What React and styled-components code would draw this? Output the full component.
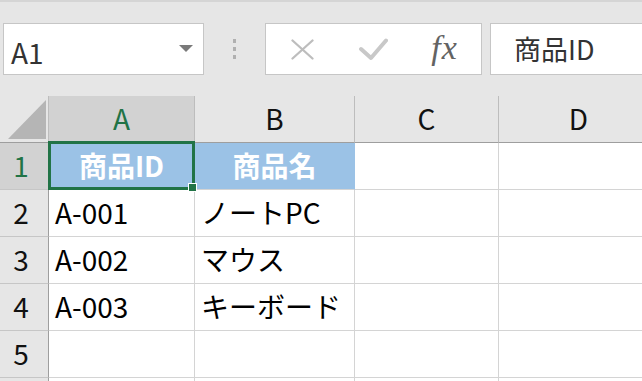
import React from "react";
import styled, { createGlobalStyle } from "styled-components";

const GlobalStyle = createGlobalStyle`
  html, body {
    margin: 0;
    padding: 0;
    background: #e6e6e6;
  }
  body {
    font-family: "Noto Sans CJK JP", "Noto Sans", sans-serif;
  }
`;

const Window = styled.div`
  width: 642px;
  height: 381px;
  overflow: hidden;
  box-sizing: border-box;
  background: #e6e6e6;
  border-top: 2px solid #d5d5d5;
`;

const FormulaBar = styled.div`
  display: flex;
  height: 52px;
  margin: 21px 0 21px 3px;
`;

const NameBox = styled.div`
  display: flex;
  align-items: center;
  box-sizing: border-box;
  width: 201px;
  padding: 5px 10px 0 7px;
  background: #fff;
  border: 1px solid #c6c6c6;
  font-size: 28px;
  color: #333;
`;

const Arrow = styled.span`
  margin-left: auto;
  width: 0;
  height: 0;
  border-left: 7px solid transparent;
  border-right: 7px solid transparent;
  border-top: 7px solid #7a7a7a;
  margin-bottom: 6px;
`;

const Grip = styled.div`
  width: 61px;
  display: flex;
  flex-direction: column;
  align-items: center;
  justify-content: center;
  gap: 4.5px;
  span {
    width: 3.5px;
    height: 3.5px;
    background: #b0b0b0;
  }
`;

const Buttons = styled.div`
  display: flex;
  box-sizing: border-box;
  width: 217px;
  padding-left: 1px;
  background: #fff;
  border: 1px solid #c6c6c6;
`;

const ToolButton = styled.div`
  width: 71px;
  display: flex;
  align-items: center;
  justify-content: center;
`;

const Fx = styled.span`
  font-family: "Liberation Serif", serif;
  font-style: italic;
  font-size: 34px;
  color: #636363;
  letter-spacing: 1px;
  margin-top: -2px;
`;

const FormulaInput = styled.div`
  flex: 1;
  display: flex;
  align-items: center;
  margin-left: 8px;
  padding: 0 0 2px 23px;
  background: #fff;
  border: 1px solid #c6c6c6;
  border-right: none;
  font-size: 27px;
  color: #333;
`;

const Sheet = styled.div`
  display: grid;
  grid-template-columns: 49px 146px 160px 144px 160px;
  grid-auto-rows: 47px;
  background: #fff;
`;

const Base = styled.div`
  position: relative;
  box-sizing: border-box;
  display: flex;
  align-items: center;
  padding-bottom: 2px;
  font-size: 28px;
  white-space: nowrap;
`;

const Corner = styled(Base)`
  padding: 0;
  background: #e6e6e6;
  border-right: 1px solid #bdbdbd;
  border-bottom: 1px solid #9e9e9e;
`;

const ColHeader = styled(Base)`
  justify-content: center;
  background: ${(p) => (p.$selected ? "#d2d2d2" : "#e6e6e6")};
  color: ${(p) => (p.$selected ? "#217346" : "#111")};
  border-right: 1px solid #bdbdbd;
  border-bottom: 1px solid #9e9e9e;
`;

const RowHeader = styled(Base)`
  justify-content: center;
  padding-right: 6px;
  background: ${(p) => (p.$selected ? "#d2d2d2" : "#e6e6e6")};
  color: ${(p) => (p.$selected ? "#217346" : "#111")};
  border-right: 1px solid #9e9e9e;
  border-bottom: 1px solid #c6c6c6;
`;

const Cell = styled(Base)`
  padding-left: 6px;
  padding-right: 6px;
  color: #000;
  border-right: 1px solid ${(p) => (p.$fill ? "#9bc2e6" : "#d4d4d4")};
  border-bottom: 1px solid #d4d4d4;
  background: ${(p) => (p.$fill ? "#9bc2e6" : "#fff")};
  ${(p) =>
    p.$fill &&
    `
    justify-content: center;
    color: #fff;
    font-weight: 700;
  `}
`;

const Selection = styled.div`
  position: absolute;
  top: -2px;
  left: -1px;
  right: -1px;
  bottom: -1px;
  border: 3px solid #217346;
  z-index: 2;
  pointer-events: none;
`;

const FillHandle = styled.div`
  position: absolute;
  right: -5px;
  bottom: -5px;
  width: 7px;
  height: 7px;
  background: #217346;
  border: 1px solid #fff;
`;

const columns = ["A", "B", "C", "D"];

const rows = [
  ["商品ID", "商品名"],
  ["A-001", "ノートPC"],
  ["A-002", "マウス"],
  ["A-003", "キーボード"],
  [],
];

export default function App() {
  // one extra, mostly hidden row below the data, as in the scrolled sheet
  const allRows = [...rows, null];

  return (
    <>
      <GlobalStyle />
      <Window>
        <FormulaBar>
          <NameBox>
            A1
            <Arrow />
          </NameBox>
          <Grip>
            <span />
            <span />
            <span />
          </Grip>
          <Buttons>
            <ToolButton>
              <svg width="23" height="21" viewBox="0 0 23 21">
                <path
                  d="M1.5 1.5 L21.5 19.5 M21.5 1.5 L1.5 19.5"
                  stroke="#bdbdbd"
                  strokeWidth="2.3"
                  strokeLinecap="round"
                  fill="none"
                />
              </svg>
            </ToolButton>
            <ToolButton>
              <svg width="29" height="24" viewBox="0 0 29 24">
                <path
                  d="M2 12 L12 21 L27 3.5"
                  stroke="#c8c8c8"
                  strokeWidth="4"
                  strokeLinecap="round"
                  strokeLinejoin="round"
                  fill="none"
                />
              </svg>
            </ToolButton>
            <ToolButton>
              <Fx>fx</Fx>
            </ToolButton>
          </Buttons>
          <FormulaInput>商品ID</FormulaInput>
        </FormulaBar>

        <Sheet>
          <Corner>
            <svg width="48" height="46" viewBox="0 0 48 46">
              <polygon points="8,43 46,43 46,4" fill="#b5b5b5" />
            </svg>
          </Corner>
          {columns.map((c) => (
            <ColHeader key={c} $selected={c === "A"}>
              {c}
            </ColHeader>
          ))}
          {allRows.map((row, r) => (
            <React.Fragment key={r}>
              <RowHeader $selected={r === 0}>{row ? r + 1 : ""}</RowHeader>
              {columns.map((c, i) => (
                <Cell key={c} $fill={r === 0 && i < 2}>
                  {(row && row[i]) || ""}
                  {r === 0 && i === 0 && (
                    <Selection>
                      <FillHandle />
                    </Selection>
                  )}
                </Cell>
              ))}
            </React.Fragment>
          ))}
        </Sheet>
      </Window>
    </>
  );
}
